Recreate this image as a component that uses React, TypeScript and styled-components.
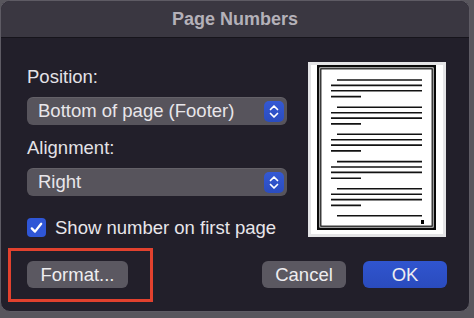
import React from 'react';
import styled, { createGlobalStyle } from 'styled-components';

const GlobalStyle = createGlobalStyle`
  html, body {
    margin: 0;
    padding: 0;
    background: #58565d;
    font-family: 'Liberation Sans', Arial, sans-serif;
  }
`;

const Window = styled.div`
  width: 470px;
  height: 312px;
  box-sizing: border-box;
  border: 1px solid #5e5b64;
  border-radius: 10px;
  overflow: hidden;
  background: #221f2a;
  display: flex;
  flex-direction: column;
`;

const TitleBar = styled.div`
  height: 36px;
  flex-shrink: 0;
  background: #3a3741;
  border-bottom: 1px solid #16141b;
  display: flex;
  align-items: center;
  justify-content: center;
  color: #b4b1b9;
  font-size: 18px;
  font-weight: bold;
`;

const Body = styled.div`
  padding: 24px 22px 0 26px;
`;

const Main = styled.div`
  display: grid;
  grid-template-columns: 260px 138px;
  column-gap: 21px;
  align-items: start;
`;

const Column = styled.div`
  display: flex;
  flex-direction: column;
`;

const FieldLabel = styled.div<{ $top: number }>`
  margin-top: ${(p) => p.$top}px;
  font-size: 18.5px;
  line-height: 22px;
  color: #e4e2e7;
`;

const Select = styled.div`
  margin-top: 9px;
  height: 28px;
  box-sizing: border-box;
  border-radius: 6px;
  background: #57545c;
  box-shadow: inset 0 1px 0 rgba(255, 255, 255, 0.08);
  display: flex;
  align-items: center;
  justify-content: space-between;
  padding: 0 3px 0 11px;
  color: #e8e6ea;
  font-size: 18.5px;
`;

const Stepper = styled.span`
  width: 20px;
  height: 21px;
  border-radius: 5px;
  background: linear-gradient(#3459d4, #2a4cbf);
  display: flex;
  align-items: center;
  justify-content: center;
`;

const CheckRow = styled.label`
  margin-top: 22px;
  display: flex;
  align-items: center;
  gap: 9px;
  font-size: 18.5px;
  color: #e8e6ea;
  line-height: 19px;
`;

const CheckBox = styled.span`
  width: 19px;
  height: 19px;
  border-radius: 4px;
  background: #2f56d6;
  display: flex;
  align-items: center;
  justify-content: center;
  flex-shrink: 0;
`;

const Preview = styled.div`
  width: 138px;
  height: 175px;
  background: #ffffff;

  svg {
    display: block;
  }
`;

const Footer = styled.div`
  margin-top: 24px;
  display: flex;
  align-items: center;
`;

const Spacer = styled.div`
  flex: 1;
`;

const Button = styled.button<{ $primary?: boolean; $width: number }>`
  width: ${(p) => p.$width}px;
  height: 27px;
  border: none;
  border-radius: 6px;
  background: ${(p) => (p.$primary ? 'linear-gradient(#3055cf, #2a4bbd)' : '#5b5861')};
  color: #eeedf0;
  font-family: 'Liberation Sans', Arial, sans-serif;
  font-size: 18.5px;
  padding: 0;
  display: flex;
  align-items: center;
  justify-content: center;
`;

const Highlighted = styled.span`
  position: relative;
  display: inline-flex;

  &::after {
    content: '';
    position: absolute;
    left: -19px;
    top: -13px;
    right: -25px;
    bottom: -14px;
    border: 3px solid #e2412e;
  }
`;

const Gap = styled.div`
  width: 17px;
`;

const Chevrons = () => (
  <svg width="10" height="15" viewBox="0 0 10 15" fill="none">
    <path d="M1.5 5.5 L5 2 L8.5 5.5" stroke="#fff" strokeWidth="1.7" strokeLinecap="round" strokeLinejoin="round" />
    <path d="M1.5 9.5 L5 13 L8.5 9.5" stroke="#fff" strokeWidth="1.7" strokeLinecap="round" strokeLinejoin="round" />
  </svg>
);

const Check = () => (
  <svg width="13" height="12" viewBox="0 0 13 12" fill="none">
    <path d="M1.8 6.4 L5 9.6 L11.2 1.8" stroke="#fff" strokeWidth="2.3" strokeLinecap="round" strokeLinejoin="round" />
  </svg>
);

const groupTops = [18, 45.3, 72.3, 99.6, 126.8];

const PageThumb = () => (
  <svg width="138" height="175" viewBox="0 0 138 175">
    <rect x="1.5" y="1.5" width="135" height="172" fill="#fff" stroke="#e4e4e6" strokeWidth="3" />
    <rect x="10.2" y="4.2" width="116.6" height="162.6" fill="none" stroke="#0a0a0a" strokeWidth="2.4" />
    <rect x="12.8" y="6.8" width="111.4" height="157.4" fill="none" stroke="#0a0a0a" strokeWidth="1.2" />
    {groupTops.map((y) => (
      <g key={y} stroke="#121212" strokeWidth="1.6">
        <line x1="29" y1={y} x2="114" y2={y} />
        <line x1="23" y1={y + 5.4} x2="114" y2={y + 5.4} />
        <line x1="23" y1={y + 10.8} x2="114" y2={y + 10.8} />
        <line x1="23" y1={y + 16.6} x2="53" y2={y + 16.6} />
      </g>
    ))}
    <line x1="29" y1="153.8" x2="114" y2="153.8" stroke="#121212" strokeWidth="1.6" />
    <rect x="113" y="158" width="3" height="4" fill="#000" />
  </svg>
);

const App: React.FC = () => {
  return (
    <>
      <GlobalStyle />
      <Window>
        <TitleBar>Page Numbers</TitleBar>
        <Body>
          <Main>
            <Column>
              <FieldLabel $top={4}>Position:</FieldLabel>
              <Select>
                Bottom of page (Footer)
                <Stepper>
                  <Chevrons />
                </Stepper>
              </Select>
              <FieldLabel $top={12}>Alignment:</FieldLabel>
              <Select>
                Right
                <Stepper>
                  <Chevrons />
                </Stepper>
              </Select>
              <CheckRow>
                <CheckBox>
                  <Check />
                </CheckBox>
                Show number on first page
              </CheckRow>
            </Column>
            <Preview>
              <PageThumb />
            </Preview>
          </Main>
          <Footer>
            <Highlighted>
              <Button $width={101}>Format...</Button>
            </Highlighted>
            <Spacer />
            <Button $width={84}>Cancel</Button>
            <Gap />
            <Button $primary $width={84}>OK</Button>
          </Footer>
        </Body>
      </Window>
    </>
  );
};

export default App;
